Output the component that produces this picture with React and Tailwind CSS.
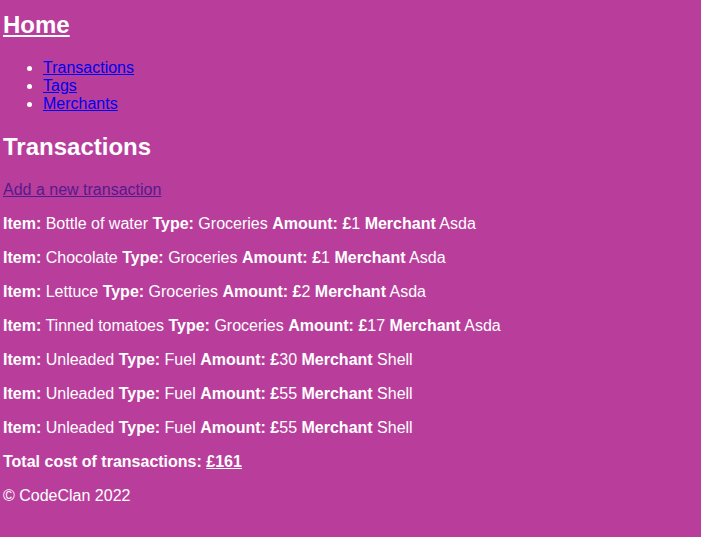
import React from 'react';

const TRANSACTIONS = [
  { item: 'Bottle of water', type: 'Groceries', amount: 1, merchant: 'Asda' },
  { item: 'Chocolate', type: 'Groceries', amount: 1, merchant: 'Asda' },
  { item: 'Lettuce', type: 'Groceries', amount: 2, merchant: 'Asda' },
  { item: 'Tinned tomatoes', type: 'Groceries', amount: 17, merchant: 'Asda' },
  { item: 'Unleaded', type: 'Fuel', amount: 30, merchant: 'Shell' },
  { item: 'Unleaded', type: 'Fuel', amount: 55, merchant: 'Shell' },
  { item: 'Unleaded', type: 'Fuel', amount: 55, merchant: 'Shell' },
];

export default function App() {
  const total = TRANSACTIONS.reduce((sum, t) => sum + t.amount, 0);

  return (
    <div className="min-h-screen bg-[#b93e9c] text-white px-[3px] pt-[11px] pb-4 text-[16px] leading-[normal] font-['Liberation_Sans',Arial,sans-serif]">
      {/* Header / nav */}
      <h2 className="text-[24px] font-bold leading-[normal]">
        <a href="#" className="underline text-white">Home</a>
      </h2>
      <ul className="list-disc pl-[40px] mt-[20px]">
        <li><a href="#" className="underline text-[#0000ee]">Transactions</a></li>
        <li><a href="#" className="underline text-[#0000ee]">Tags</a></li>
        <li><a href="#" className="underline text-[#0000ee]">Merchants</a></li>
      </ul>

      {/* Transactions */}
      <h2 className="text-[24px] font-bold leading-[normal] mt-[20px]">Transactions</h2>
      <p className="mt-[20px]">
        <a href="#" className="underline text-[#551a8b]">Add a new transaction</a>
      </p>

      {TRANSACTIONS.map((t, i) => (
        <p key={i} className="mt-[16px]">
          <b>Item:</b> {t.item} <b>Type:</b> {t.type} <b>Amount: £</b>{t.amount} <b>Merchant</b> {t.merchant}
        </p>
      ))}

      <p className="mt-[16px] font-bold">
        Total cost of transactions: <span className="underline">£{total}</span>
      </p>

      <footer className="mt-[16px]">
        <p>© CodeClan 2022</p>
      </footer>
    </div>
  );
}
